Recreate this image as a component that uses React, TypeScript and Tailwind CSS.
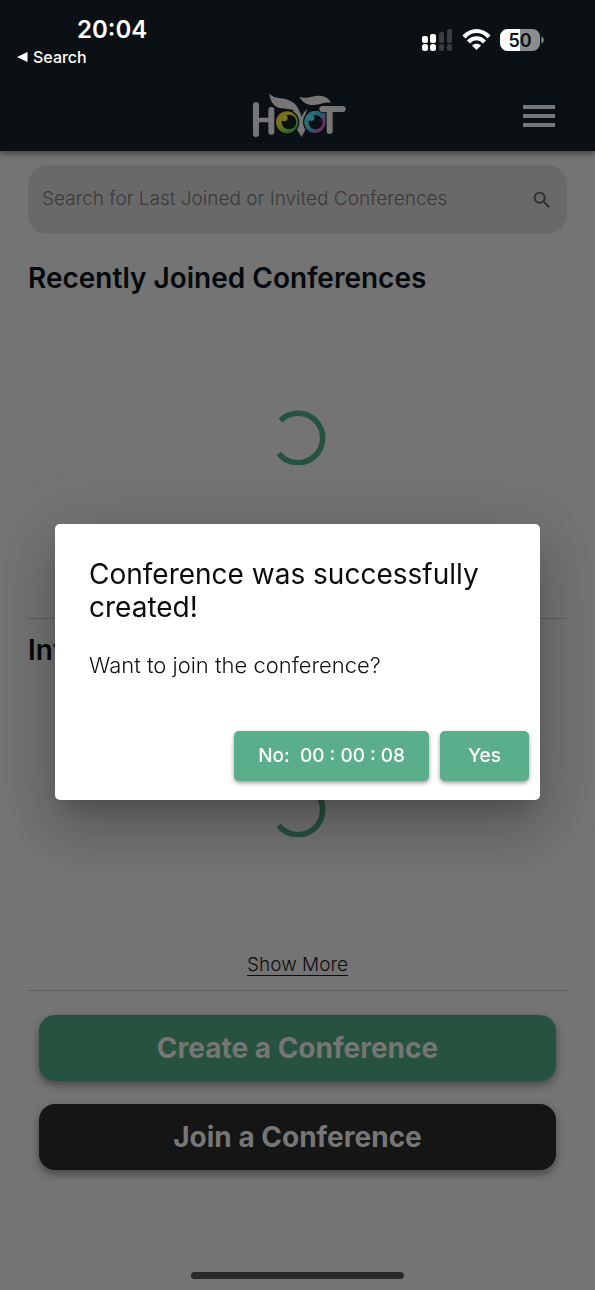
import React from "react";

function Logo() {
  return (
    <svg viewBox="0 0 360 195" className="h-[65px] w-[120px]" role="img" aria-label="Hoot">
      <defs>
        <linearGradient id="eyeLeft" x1="0.1" y1="0" x2="0.8" y2="1">
          <stop offset="0.1" stopColor="#7d6f22" />
          <stop offset="0.5" stopColor="#68721e" />
          <stop offset="0.9" stopColor="#1f6a25" />
        </linearGradient>
        <linearGradient id="eyeRight" x1="0" y1="0.1" x2="1" y2="0.9">
          <stop offset="0.2" stopColor="#2c7478" />
          <stop offset="0.5" stopColor="#2a5a78" />
          <stop offset="0.8" stopColor="#6a2f5c" />
        </linearGradient>
      </defs>
      <g fill="none" stroke="#767676" strokeWidth="18" strokeLinecap="round">
        <path d="M48 60V147" />
        <path d="M94 75V140" />
        <path d="M46 114C49 105 56 105 64 105H94" strokeWidth="14" />
      </g>
      <path d="M160 60C174 72 180 84 185 96C190 84 194 78 202 73C193 92 192 114 199 128L185 156L168 130C174 110 172 92 160 80Z" fill="#767676" />
      <circle cx="141" cy="112" r="35" fill="url(#eyeLeft)" stroke="#0a1014" strokeWidth="4" />
      <circle cx="147" cy="111" r="22" fill="#0a1014" />
      <circle cx="133" cy="99" r="10" fill="#7a7222" />
      <path d="M225 76H259V112A34 35 0 1 1 225 76Z" fill="url(#eyeRight)" stroke="#0a1014" strokeWidth="4" />
      <circle cx="227" cy="112" r="21" fill="#0a1014" />
      <circle cx="214" cy="99" r="9" fill="#2c7478" />
      <path d="M87 25C99 42 124 37 145 45C172 55 178 76 185 96L182 110C180 98 176 88 168 81C156 70 143 74 122 70C102 67 91 50 87 25Z" fill="#767676" />
      <path d="M178 35C203 45 223 28 246 33C260 36 269 43 273 54C254 49 243 59 222 60C200 61 187 51 178 35Z" fill="#767676" />
      <path d="M247 72H308M269 72V138" fill="none" stroke="#0a1014" strokeWidth="23" strokeLinecap="round" />
      <path d="M247 72H308M269 72V138" fill="none" stroke="#767676" strokeWidth="18" strokeLinecap="round" />
    </svg>
  );
}

function StatusIcons() {
  return (
    <svg viewBox="0 0 124 26" className="h-[26px] w-[124px]" aria-hidden="true">
      <g fill="#ffffff">
        <rect x="1" y="9" width="6" height="7" rx="2" />
        <rect x="9" y="7" width="6" height="9" rx="2" />
        <rect x="1" y="17" width="6" height="7" rx="2.5" />
        <rect x="9" y="17" width="6" height="7" rx="2.5" />
      </g>
      <g fill="#3a3e41">
        <rect x="18" y="5" width="5" height="11" rx="2" />
        <rect x="26" y="2" width="5" height="14" rx="2" />
        <rect x="18" y="17" width="5" height="7" rx="2.5" />
        <rect x="26" y="17" width="5" height="7" rx="2.5" />
      </g>
      <g fill="none" stroke="#ffffff" strokeWidth="4.2">
        <path d="M43 10C50 2 61 2 68 10" />
        <path d="M47.500 15C52 10 59 10 63.500 15" />
      </g>
      <path d="M55.500 23L51 18.500C53.500 16 57.500 16 60 18.500Z" fill="#ffffff" />
      <path d="M86.500 2H99V24H86.500A7.500 7.500 0 0 1 79 16.500V9.500A7.500 7.500 0 0 1 86.500 2Z" fill="#ffffff" />
      <path d="M99 2H111.500A7.500 7.500 0 0 1 119 9.500V16.500A7.500 7.500 0 0 1 111.500 24H99Z" fill="#8c8d8e" />
      <path d="M120.500 9.500C123.500 10.500 123.500 15.500 120.500 16.500Z" fill="#8c8d8e" />
      <text x="99" y="19.500" textAnchor="middle" fontSize="18" fontWeight="600" fill="#0a1014">50</text>
    </svg>
  );
}

function Spinner() {
  return (
    <svg viewBox="0 0 56 56" className="size-14" role="img" aria-label="Loading">
      <path d="M10.500 11.500A24.700 24.700 0 1 1 8.700 44.500" fill="none" stroke="#27523f" strokeWidth="5.600" />
    </svg>
  );
}

function ConferenceSection({ title, hasMore = false }: { title: string; hasMore?: boolean }) {
  return (
    <section className="flex min-h-[372px] flex-col border-b border-[#5e5e5e] pt-[13px] pb-[10px]">
      <h2 className="text-[28px] leading-9 font-semibold text-[#05090c]">{title}</h2>
      <div className="flex h-[282px] items-center justify-center">
        <Spinner />
      </div>
      {hasMore && (
        <a href="#more" className="self-center text-[19px] leading-[30px] font-light text-[#0c0c0c] underline decoration-1 underline-offset-4">
          Show More
        </a>
      )}
    </section>
  );
}

function ConfirmDialog() {
  return (
    <div className="fixed inset-0 flex items-center justify-center px-[55px] pt-[34px]">
      <div
        role="dialog"
        aria-modal="true"
        aria-labelledby="dialog-title"
        className="w-full rounded-[5px] bg-white px-[11px] pt-[34px] pb-[19px] shadow-[0_15px_21px_-10px_rgba(0,0,0,0.2),0_33px_52px_4px_rgba(0,0,0,0.14),0_12px_63px_11px_rgba(0,0,0,0.12)]"
      >
        <div className="px-[23px]">
          <h1 id="dialog-title" className="text-[28px] leading-[33px] text-[#0b0b0b]">Conference was successfully created!</h1>
          <p className="mt-6 text-[22px] leading-[34px] font-light text-[#111111]">Want to join the conference?</p>
        </div>
        <div className="mt-[49px] flex justify-end gap-[11px]">
          <button type="button" className="h-[50px] rounded-[5px] bg-[#5bae8b] px-6 text-[19px] font-medium whitespace-pre text-white shadow-[0_2px_4px_rgba(0,0,0,0.4)]">
            {"No:  00 : 00 : 08"}
          </button>
          <button type="button" className="h-[50px] rounded-[5px] bg-[#5bae8b] px-7 text-[19px] font-medium text-white shadow-[0_2px_4px_rgba(0,0,0,0.4)]">
            Yes
          </button>
        </div>
      </div>
    </div>
  );
}

export default function App() {
  return (
    <div className="flex min-h-screen flex-col bg-[#747474] font-[Inter,sans-serif]">
      <header className="bg-[#0a1014] shadow-[0_2px_6px_rgba(0,0,0,0.5)]">
        <div className="flex h-[85px] items-start justify-between pr-[50px] pl-[17px]">
          <div className="flex flex-col pt-[14px] text-white">
            <span className="pl-[60px] text-[24px] leading-8 font-semibold">20:04</span>
            <a href="#search" className="flex items-center gap-[5px] text-[16px] leading-[22px] font-medium">
              <svg viewBox="0 0 11 10" className="h-[10px] w-[11px]" aria-hidden="true">
                <path d="M0 5L10.500 0V10Z" fill="#ffffff" />
              </svg>
              Search
            </a>
          </div>
          <div className="pt-[27px]">
            <StatusIcons />
          </div>
        </div>
        <div className="grid h-[66px] grid-cols-[1fr_auto_1fr] items-start pr-10 pl-11">
          <span />
          <Logo />
          <button type="button" aria-label="Menu" className="mt-5 flex flex-col gap-[5px] justify-self-end">
            <span className="h-1 w-8 bg-[#767676]" />
            <span className="h-1 w-8 bg-[#767676]" />
            <span className="h-1 w-8 bg-[#767676]" />
          </button>
        </div>
      </header>

      <main className="flex flex-col px-7 pt-[14px]">
        <label className="mb-[13px] flex h-[69px] items-center rounded-[20px] bg-[#696969] pr-[14px] pl-[14px]">
          <input
            type="text"
            aria-label="Search conferences"
            placeholder="Search for Last Joined or Invited Conferences"
            className="min-w-0 flex-1 bg-transparent text-[19px] font-light text-[#2b2b2b] outline-none placeholder:text-[#3b3b3b]"
          />
          <svg viewBox="0 0 24 24" className="size-[22px]" fill="#2e2e2e" aria-hidden="true">
            <path d="M15.500 14h-.79l-.28-.27A6.470 6.470 0 0 0 16 9.500 6.500 6.500 0 1 0 9.500 16c1.610 0 3.090-.59 4.230-1.570l.27.28v.79l5 4.990L20.490 19l-4.990-5zm-6 0C7.010 14 5 11.990 5 9.500S7.010 5 9.500 5 14 7.010 14 9.500 11.990 14 9.500 14z" />
          </svg>
        </label>

        <ConferenceSection title="Recently Joined Conferences" />
        <ConferenceSection title="Invited Conferences" hasMore />

        <div className="flex flex-col gap-[23px] px-[11px] pt-6">
          <button type="button" className="h-[66px] rounded-[16px] bg-[#27523f] text-[28px] font-bold text-[#767676] shadow-[0_4px_8px_rgba(0,0,0,0.4)]">
            Create a Conference
          </button>
          <button type="button" className="h-[66px] rounded-[16px] bg-[#151515] text-[28px] font-bold text-[#767676] shadow-[0_4px_8px_rgba(0,0,0,0.4)]">
            Join a Conference
          </button>
        </div>
      </main>

      <div className="mt-auto flex justify-center pb-[11px]">
        <div className="h-[7px] w-[213px] rounded-full bg-[#292929]" />
      </div>

      <ConfirmDialog />
    </div>
  );
}
